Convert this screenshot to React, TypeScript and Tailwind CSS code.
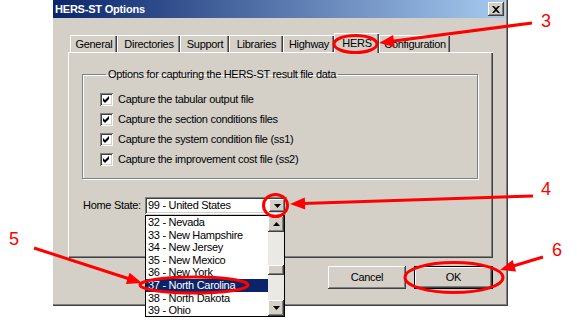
import React from "react";

const RAISED =
  "shadow-[inset_-1px_-1px_#404040,inset_1px_1px_#ffffff,inset_-2px_-2px_#808080,inset_2px_2px_#d4d0c8]";
const SUNKEN =
  "shadow-[inset_1px_1px_#808080,inset_-1px_-1px_#ffffff,inset_2px_2px_#404040,inset_-2px_-2px_#d4d0c8]";

function Arrow({ sx, sy, tx, ty }: { sx: number; sy: number; tx: number; ty: number }) {
  const dx = tx - sx;
  const dy = ty - sy;
  const len = Math.hypot(dx, dy);
  const ux = dx / len;
  const uy = dy / len;
  const nx = -uy;
  const ny = ux;
  const hl = 15;
  const hw = 6;
  const bx = tx - ux * hl;
  const by = ty - uy * hl;
  const pts = `${tx},${ty} ${bx + nx * hw},${by + ny * hw} ${bx - nx * hw},${by - ny * hw}`;
  return (
    <g>
      <line x1={sx} y1={sy} x2={bx + ux * 2} y2={by + uy * 2} stroke="#ff0000" strokeWidth={3} />
      <polygon points={pts} fill="#ff0000" />
    </g>
  );
}

function Check() {
  return (
    <div className={`w-[13px] h-[13px] bg-white ${SUNKEN} flex items-center justify-center shrink-0`}>
      <svg width="13" height="13" viewBox="0 0 13 13">
        <path d="M3 5 L5 7 L9 3 L9 6 L5 10 L3 8 Z" fill="#000" />
      </svg>
    </div>
  );
}

function Tri({ down }: { down?: boolean }) {
  return (
    <svg width="7" height="4" viewBox="0 0 7 4">
      {down ? <path d="M0 0 H7 L3.5 4 Z" fill="#000" /> : <path d="M0 4 H7 L3.5 0 Z" fill="#000" />}
    </svg>
  );
}

const tabs = [
  { label: "General", w: "w-[47px]" },
  { label: "Directories", w: "w-[63px]" },
  { label: "Support", w: "w-[49px]" },
  { label: "Libraries", w: "w-[54px]" },
  { label: "Highway", w: "w-[51px]" },
  { label: "HERS", w: "w-[45px]", sel: true },
  { label: "Configuration", w: "w-[71px]" },
];

const checks = [
  "Capture the tabular output file",
  "Capture the section conditions files",
  "Capture the system condition file (ss1)",
  "Capture the improvement cost file (ss2)",
];

const states = [
  "32 - Nevada",
  "33 - New Hampshire",
  "34 - New Jersey",
  "35 - New Mexico",
  "36 - New York",
  "37 - North Carolina",
  "38 - North Dakota",
  "39 - Ohio",
];

export default function App() {
  return (
    <div className="relative w-[577px] h-[323px] bg-white overflow-hidden font-['Liberation_Sans',Arial,sans-serif] text-[11px] tracking-[-0.3px] text-black">
      <div className="ml-[53px] w-[455px] h-[306px] bg-[#d4d0c8] flex flex-col shadow-[inset_-1px_-1px_#404040,inset_-2px_-2px_#808080]">
        {/* title bar */}
        <div className="h-[18px] mr-[3px] bg-[linear-gradient(to_right,#0a246a,#a6caf0)] flex items-center justify-between pl-[2px] pr-[1px]">
          <span className="text-white font-bold text-[11px] tracking-[-0.2px] leading-none">HERS-ST Options</span>
          <div className={`w-[16px] h-[14px] bg-[#d4d0c8] ${RAISED} flex items-center justify-center`}>
            <svg width="8" height="7" viewBox="0 0 8 7">
              <path d="M0 0 H2 L4 2 L6 0 H8 L5 3.5 L8 7 H6 L4 5 L2 7 H0 L3 3.5 Z" fill="#000" />
            </svg>
          </div>
        </div>

        {/* tabs */}
        <div className="mt-[15px] ml-[17px] h-[19px] flex items-end relative z-10">
          {tabs.map((t) =>
            t.sel ? (
              <div
                key={t.label}
                className={`${t.w} h-[20px] -mb-px bg-[#d4d0c8] border-t border-l border-white shadow-[inset_-1px_0_#404040,inset_-2px_0_#808080] flex items-center justify-center pb-[1px]`}
              >
                {t.label}
              </div>
            ) : (
              <div
                key={t.label}
                className={`${t.w} h-[17px] border-t border-l border-white shadow-[inset_-1px_0_#404040,inset_-2px_0_#808080] flex items-center justify-center pt-[1px]`}
              >
                {t.label}
              </div>
            )
          )}
        </div>

        {/* panel */}
        <div className="ml-[15px] w-[425px] h-[206px] shadow-[inset_1px_1px_#ffffff,inset_-1px_-1px_#404040,inset_-2px_-2px_#808080] flex flex-col">
          <fieldset className="ml-[14px] mt-[16px] w-[396px] h-[111px] border border-[#808080] shadow-[inset_1px_1px_#ffffff,1px_1px_#ffffff] pl-[17px]">
            <legend className="ml-[6px] px-[2px] leading-[13px]">Options for capturing the HERS-ST result file data</legend>
            <div className="flex flex-col mt-[8px]">
              {checks.map((c) => (
                <div key={c} className="h-[20px] flex items-center gap-[5px]">
                  <Check />
                  <span>{c}</span>
                </div>
              ))}
            </div>
          </fieldset>

          <div className="mt-[18px] ml-[15px] flex items-center h-[17px]">
            <span className="w-[62px]">Home State:</span>
            <div className="relative">
              <div className={`w-[142px] h-[17px] bg-white ${SUNKEN} flex items-center pl-[3px] pr-[2px]`}>
                <span className="flex-1">99 - United States</span>
                <div className={`w-[16px] h-[13px] bg-[#d4d0c8] ${RAISED} flex items-center justify-center`}>
                  <Tri down />
                </div>
              </div>
              {/* dropdown list */}
              <div className="absolute left-0 top-[18px] w-[140px] h-[102px] bg-white border border-black flex z-20">
                <div className="flex-1 flex flex-col">
                  {states.map((s, i) => (
                    <div
                      key={s}
                      className={`h-[12.6px] leading-[12.6px] pl-[2px] ${i === 5 ? "bg-[#0a246a] text-white" : ""}`}
                    >
                      {s}
                    </div>
                  ))}
                </div>
                <div className="w-[16px] flex flex-col bg-[#ebe9e4]">
                  <div className={`h-[16px] bg-[#d4d0c8] ${RAISED} flex items-center justify-center`}>
                    <Tri />
                  </div>
                  <div className="h-[33px]" />
                  <div className={`h-[10px] bg-[#d4d0c8] ${RAISED}`} />
                  <div className="flex-1" />
                  <div className={`h-[16px] bg-[#d4d0c8] ${RAISED} flex items-center justify-center`}>
                    <Tri down />
                  </div>
                </div>
              </div>
            </div>
          </div>
        </div>

        {/* buttons */}
        <div className="mt-[8px] ml-[275px] flex gap-[8px]">
          <div className={`w-[78px] h-[23px] ${RAISED} flex items-center justify-center`}>Cancel</div>
          <div className="w-[79px] h-[23px] border border-black">
            <div className={`w-full h-full ${RAISED} flex items-center justify-center`}>OK</div>
          </div>
        </div>
      </div>

      {/* annotations */}
      <svg className="absolute left-0 top-0 pointer-events-none z-30" width={577} height={323}>
        <g stroke="#ff0000" strokeWidth={3} fill="none">
          <ellipse cx={355.5} cy={44} rx={21.5} ry={8.5} />
          <ellipse cx={275.5} cy={205.5} rx={12} ry={11} />
          <ellipse cx={194} cy={285} rx={54} ry={8} />
          <ellipse cx={454} cy={277.5} rx={49} ry={15} />
        </g>
        <Arrow sx={532} sy={23} tx={379} ty={43} />
        <Arrow sx={533} sy={196} tx={290} ty={204} />
        <Arrow sx={34} sy={248} tx={142} ty={283} />
        <Arrow sx={543} sy={257} tx={500} ty={270} />
        <g fill="#ff0000" fontFamily="'Liberation Sans', Arial, sans-serif" fontSize={18}>
          <text x={541} y={27}>3</text>
          <text x={541} y={195}>4</text>
          <text x={9} y={245}>5</text>
          <text x={552} y={256}>6</text>
        </g>
      </svg>
    </div>
  );
}
